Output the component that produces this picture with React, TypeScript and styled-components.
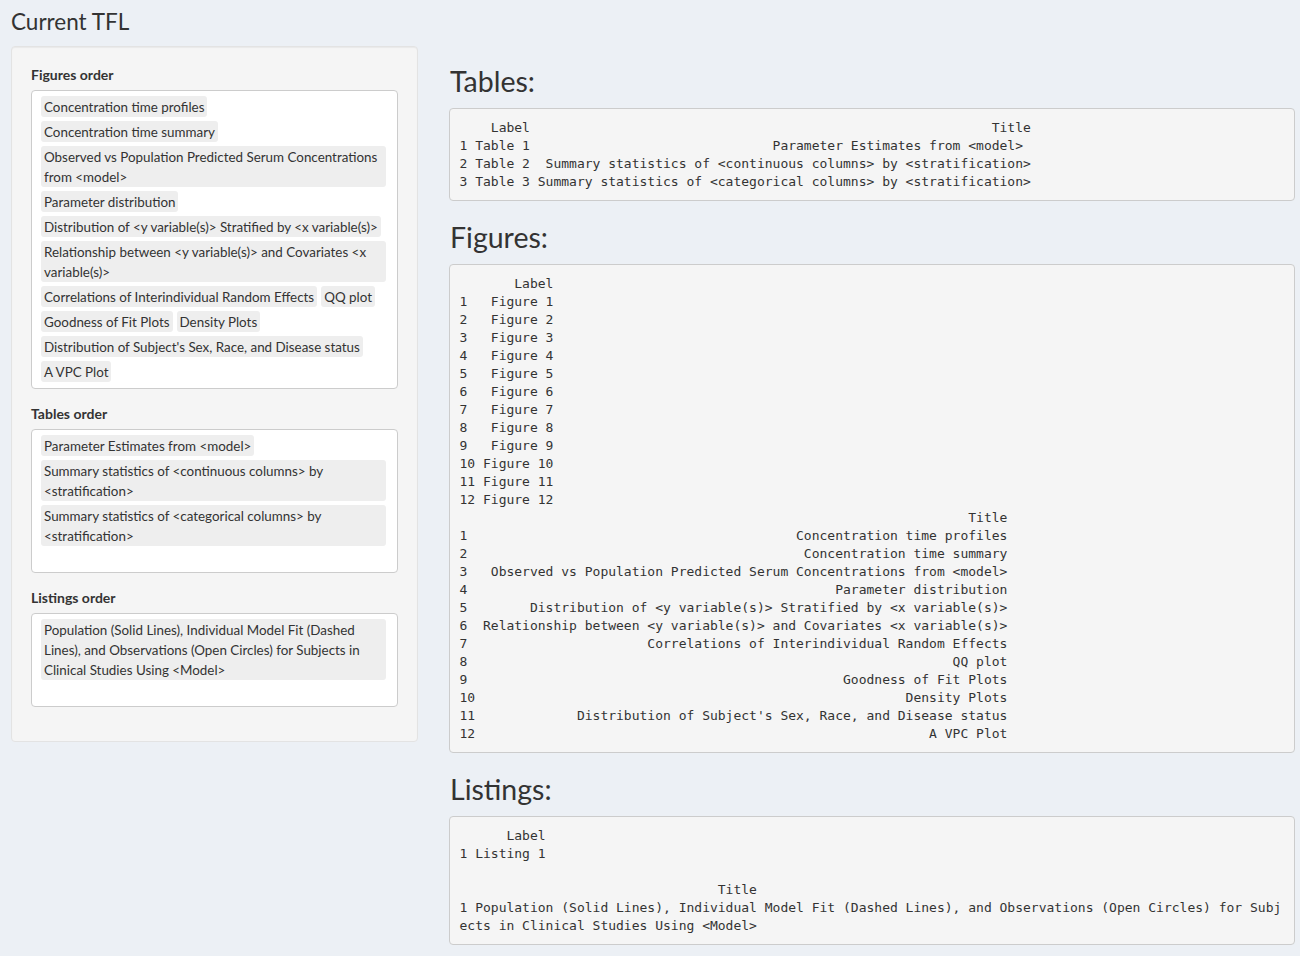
import React from "react";
import styled, { createGlobalStyle } from "styled-components";

const Global = createGlobalStyle`
  html, body { margin: 0; padding: 0; }
  body {
    background: #ecf0f5;
    color: #333;
    font-family: Lato, "Liberation Sans", sans-serif;
    font-size: 14px;
  }
`;

const Page = styled.div`
  padding: 0 5px 12px 11px;
`;

const PageTitle = styled.h1`
  margin: 0;
  padding-top: 5px;
  height: 41px;
  font-size: 22.5px;
  line-height: 34px;
  font-weight: 400;
  color: #333;
`;

const Columns = styled.div`
  display: grid;
  grid-template-columns: 407px 846px;
  column-gap: 31px;
  align-items: start;
`;

const Well = styled.div`
  background: #f5f5f5;
  border: 1px solid #e3e3e3;
  border-radius: 4px;
  box-shadow: inset 0 1px 1px rgba(0, 0, 0, 0.05);
  padding: 18px 19px 19px;
`;

const Group = styled.div`
  margin-bottom: 15px;
`;

const Label = styled.div`
  font-weight: 700;
  font-size: 14px;
  line-height: 20px;
  margin-bottom: 5px;
`;

const SortBox = styled.div<{ $extra: number }>`
  background: #fff;
  border: 1px solid #ccc;
  border-radius: 4px;
  padding: 5px 11px ${(p) => 6 + p.$extra}px 9px;
  display: flex;
  flex-wrap: wrap;
  gap: 4px 4px;
  align-items: flex-start;
`;

const Chip = styled.div`
  background: #eee;
  border-radius: 3px;
  padding: 0.5px 3px;
  font-size: 13.4px;
  line-height: 20px;
  color: #333;
`;

const Main = styled.div`
  display: block;
`;

const Heading = styled.h2`
  margin: 20px 0 10px 1px;
  font-size: 28.5px;
  font-weight: 400;
  line-height: 33px;
  color: #333;
  &:first-child { margin-top: 19px; }
`;

const Pre = styled.pre`
  margin: 0 0 10px;
  padding: 9.5px;
  background: #f5f5f5;
  border: 1px solid #ccc;
  border-radius: 4px;
  font-family: "DejaVu Sans Mono", "Liberation Mono", monospace;
  font-size: 13px;
  line-height: 18px;
  color: #333;
  white-space: pre-wrap;
  word-break: break-all;
`;

const figures = [
  "Concentration time profiles",
  "Concentration time summary",
  "Observed vs Population Predicted Serum Concentrations from <model>",
  "Parameter distribution",
  "Distribution of <y variable(s)> Stratified by <x variable(s)>",
  "Relationship between <y variable(s)> and Covariates <x variable(s)>",
  "Correlations of Interindividual Random Effects",
  "QQ plot",
  "Goodness of Fit Plots",
  "Density Plots",
  "Distribution of Subject's Sex, Race, and Disease status",
  "A VPC Plot",
];

const tables = [
  "Parameter Estimates from <model>",
  "Summary statistics of <continuous columns> by <stratification>",
  "Summary statistics of <categorical columns> by <stratification>",
];

const tableTitlesRaw = [
  "Parameter Estimates from <model> ",
  "Summary statistics of <continuous columns> by <stratification>",
  "Summary statistics of <categorical columns> by <stratification>",
];

const listings = [
  "Population (Solid Lines), Individual Model Fit (Dashed Lines), and Observations (Open Circles) for Subjects in Clinical Studies Using <Model>",
];

const padL = (s: string, n: number) => " ".repeat(Math.max(0, n - s.length)) + s;
const padR = (s: string, n: number) => s + " ".repeat(Math.max(0, n - s.length));

function tablesText() {
  const w = Math.max(...tableTitlesRaw.map((t) => t.length));
  const lines = [" " + " " + padL("Label", 7) + " " + padL("Title", w)];
  tableTitlesRaw.forEach((t, i) => {
    lines.push(`${i + 1} ${padL(`Table ${i + 1}`, 7)} ${padL(t, w)}`);
  });
  return lines.join("\n");
}

function figuresText() {
  const w = Math.max(...figures.map((t) => t.length));
  const lines = [padR("", 2) + " " + padL("Label", 9)];
  figures.forEach((_, i) => {
    lines.push(`${padR(String(i + 1), 2)} ${padL(`Figure ${i + 1}`, 9)}`);
  });
  lines.push(padR("", 2) + " " + padL("Title", w));
  figures.forEach((t, i) => {
    lines.push(`${padR(String(i + 1), 2)} ${padL(t, w)}`);
  });
  return lines.join("\n");
}

function listingsText() {
  return [
    "      Label",
    "1 Listing 1",
    "",
    " ".repeat(33) + "Title",
    "1 " + listings[0],
  ].join("\n");
}

const Order: React.FC<{ label: string; items: string[]; extra: number }> = ({ label, items, extra }) => (
  <Group>
    <Label>{label}</Label>
    <SortBox $extra={extra}>
      {items.map((it) => (
        <Chip key={it}>{it}</Chip>
      ))}
    </SortBox>
  </Group>
);

export default function App() {
  return (
    <Page>
      <Global />
      <PageTitle>Current TFL</PageTitle>
      <Columns>
        <Well>
          <Order label="Figures order" items={figures} extra={0} />
          <Order label="Tables order" items={tables} extra={20} />
          <Order label="Listings order" items={listings} extra={20} />
        </Well>
        <Main>
          <Heading>Tables:</Heading>
          <Pre>{tablesText()}</Pre>
          <Heading>Figures:</Heading>
          <Pre>{figuresText()}</Pre>
          <Heading>Listings:</Heading>
          <Pre>{listingsText()}</Pre>
        </Main>
      </Columns>
    </Page>
  );
}
